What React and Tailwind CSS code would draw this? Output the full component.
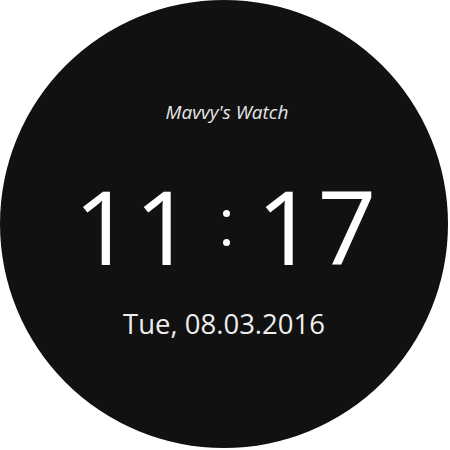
export default function App() {
  return (
    <div className="w-[450px] h-[450px] bg-white">
      <div className="w-[448px] h-[448px] rounded-full bg-[#111111] flex flex-col items-center text-white font-['Open_Sans',sans-serif]">
        <div className="mt-[103px] text-[19px] italic leading-none text-[#e6e6e6] pl-[6px]">Mavvy's Watch</div>
        <div className="mt-[52px] flex items-center text-[103px] font-normal leading-none pl-[4px]">
          <span className="tracking-[2px]">11</span>
          <span className="mx-[27px] flex flex-col gap-[22px] mt-[4px]">
            <span className="w-[7px] h-[7px] rounded-full bg-white"></span>
            <span className="w-[7px] h-[7px] rounded-full bg-white"></span>
          </span>
          <span className="tracking-[2px]">17</span>
        </div>
        <div className="mt-[33px] text-[27.5px] leading-none text-[#eeeeee]">Tue, 08.03.2016</div>
      </div>
    </div>
  );
}
